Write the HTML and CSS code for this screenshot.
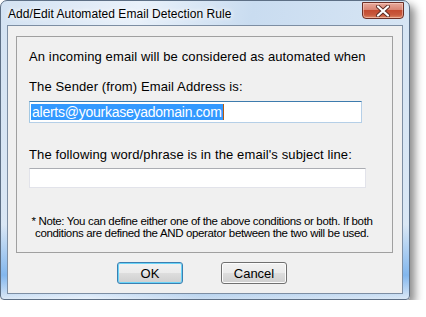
FILE: index.html
```html
<!DOCTYPE html>
<html lang="en">

<head>
    <meta charset="UTF-8">
    <title>Add/Edit Automated Email Detection Rule</title>
    <link rel="stylesheet" href="styles.css">
</head>

<body>
    <div class="window">
        <div class="titlebar">
            <span class="title">Add/Edit Automated Email Detection Rule</span>
            <div class="close">
                <svg width="18" height="12" viewBox="0 0 18 12">
                    <path d="M4 1.5 L14 10.5 M14 1.5 L4 10.5" stroke="#5a2a22" stroke-width="4" stroke-linecap="round" />
                    <path d="M4 1.5 L14 10.5 M14 1.5 L4 10.5" stroke="#ffffff" stroke-width="2.2" stroke-linecap="round" />
                </svg>
            </div>
        </div>

        <div class="client">
            <div class="group">
                <p class="intro">An incoming email will be considered as automated when</p>

                <label class="label sender-label">The Sender (from) Email Address is:</label>
                <div class="textbox focused">
                    <span class="selected">alerts@yourkaseyadomain.com</span><span class="caret"></span>
                </div>

                <label class="label subject-label">The following word/phrase is in the email's subject line:</label>
                <div class="textbox wide"></div>

                <p class="note">* Note: You can define either one of the above conditions or both. If both<br>conditions are defined the AND operator between the two will be used.</p>
            </div>

            <div class="buttons">
                <button class="btn default">OK</button>
                <button class="btn">Cancel</button>
            </div>
        </div>
    </div>
</body>

</html>
```

FILE: styles.css
```css
body {
    margin: 0;
    background: #ffffff;
    font-family: "Liberation Sans", Arial, sans-serif;
}

.window {
    box-sizing: border-box;
    width: 410px;
    height: 300px;
    padding: 0 6px 5px 6px;
    display: flex;
    flex-direction: column;
    border: 1px solid #5d6f85;
    border-radius: 7px 7px 4px 4px;
    background:
        linear-gradient(to bottom, rgba(255, 255, 255, 0) 75%, rgba(58, 143, 232, 0.55) 92%, rgba(255, 255, 255, 0) 100%),
        linear-gradient(100deg, #d3e2f2 0%, #e9f1fa 30%, #c9dcf0 55%, #dbe8f5 100%);
    box-shadow: 5px 5px 9px rgba(0, 0, 0, 0.45);
}

.titlebar {
    height: 24px;
    display: flex;
    justify-content: space-between;
    align-items: flex-start;
}

.title {
    margin-top: 6px;
    margin-left: 1px;
    font-size: 12px;
    letter-spacing: 0.05px;
    color: #000;
    text-shadow: 0 0 6px #fff, 0 0 4px #fff;
}

.close {
    box-sizing: border-box;
    width: 42px;
    height: 17px;
    margin-top: 1px;
    margin-right: -1px;
    display: flex;
    align-items: center;
    justify-content: center;
    border: 1px solid #6b2f26;
    border-radius: 0 0 4px 4px;
    background: linear-gradient(#e8aa9c 0%, #d98573 45%, #c44b30 50%, #c85a3e 80%, #e08a66 100%);
    box-shadow: inset 0 0 0 1px rgba(255, 220, 210, 0.5);
}

.client {
    flex: 1;
    display: flex;
    flex-direction: column;
    border: 1px solid #7d8ea3;
    background: #f0f0f0;
}

.group {
    margin: 10px 9px 0 8px;
    padding: 12px 17px 13px 12px;
    border: 1px solid #a0a0a0;
    color: #000;
}

.intro,
.label {
    display: block;
    margin: 0;
    font-size: 13px;
    line-height: 16px;
    letter-spacing: 0.12px;
    white-space: nowrap;
}

.sender-label {
    margin-top: 14px;
}

.subject-label {
    margin-top: 24px;
}

.textbox {
    box-sizing: border-box;
    width: 333px;
    height: 22px;
    margin-top: 6px;
    padding: 2px 1px;
    display: flex;
    align-items: stretch;
    background: #fff;
    border: 1px solid #e2e3ea;
    border-top-color: #abadb3;
}

.textbox.focused {
    border-color: #b5cfe7;
    border-top-color: #3d7bad;
    border-left-color: #a4c9e3;
}

.textbox.wide {
    width: 337px;
    height: 20px;
    margin-top: 5px;
}

.selected {
    padding: 0 1px;
    background: #3399ff;
    color: #fff;
    font-size: 14px;
    line-height: 16px;
    letter-spacing: -0.25px;
}

.caret {
    width: 1px;
    background: #b35a12;
}

.note {
    margin: 27px 0 0 0;
    font-size: 11.5px;
    line-height: 12px;
    letter-spacing: -0.35px;
    text-align: center;
    white-space: nowrap;
}

.buttons {
    margin-top: 9px;
    padding-right: 6px;
    display: flex;
    justify-content: center;
    gap: 38px;
}

.btn {
    box-sizing: border-box;
    width: 66px;
    height: 22px;
    padding: 0;
    font-family: "Liberation Sans", Arial, sans-serif;
    font-size: 13px;
    color: #000;
    border: 1px solid #707070;
    border-radius: 3px;
    background: linear-gradient(#f2f2f2 0%, #ebebeb 48%, #dddddd 52%, #cfcfcf 100%);
    box-shadow: inset 0 0 0 1px #fcfcfc;
}

.btn.default {
    border-color: #3c7fb1;
    box-shadow: inset 0 0 0 1px #6ad4f8;
}
```
